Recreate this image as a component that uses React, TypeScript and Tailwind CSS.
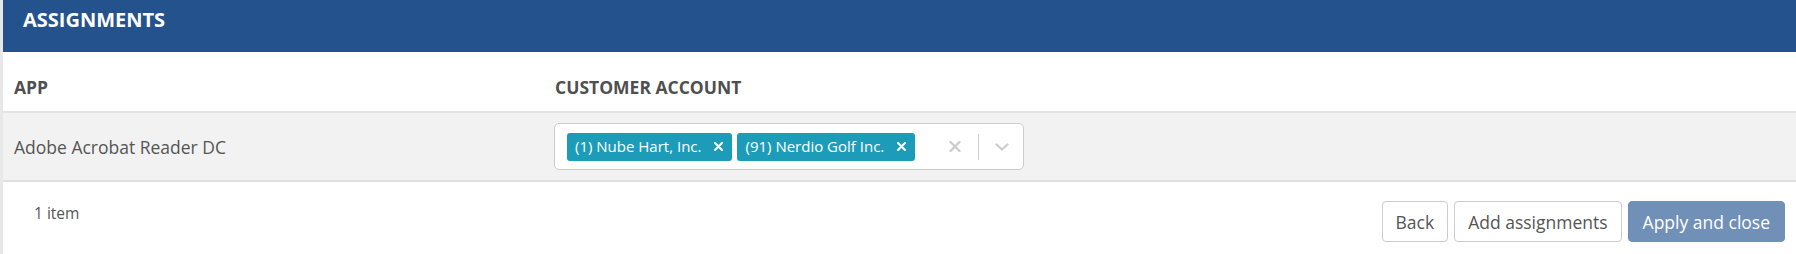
const ClearIcon = () => (
  <svg viewBox="0 0 12 12" className="h-[13px] w-[12px]" fill="none" stroke="#cccccc" strokeWidth={2.4} strokeLinecap="round">
    <path d="M1.5 1.5l9 9M10.5 1.5l-9 9" />
  </svg>
);

const Chevron = () => (
  <svg viewBox="0 0 14 8" className="h-[8px] w-[14px]" fill="none" stroke="#cccccc" strokeWidth={2.2} strokeLinecap="round" strokeLinejoin="round">
    <path d="M1.5 1.5L7 6.5l5.5-5" />
  </svg>
);

const Chip = ({ label }: { label: string }) => (
  <span className="flex h-[28px] items-center gap-[13px] rounded-[3px] bg-[#1d9cb9] pl-[8px] pr-[9px] text-[15px] leading-none text-white">
    {label}
    <svg viewBox="0 0 9 9" className="h-[9px] w-[9px]" fill="none" stroke="white" strokeWidth={2} strokeLinecap="round">
      <path d="M1 1l7 7M8 1L1 8" />
    </svg>
  </span>
);

const App = () => {
  const customers = ["(1) Nube Hart, Inc.", "(91) Nerdio Golf Inc."];

  return (
    <div className="h-[254px] w-[1796px] border-l-[3px] border-[#e8e8e8] bg-white font-['Open_Sans',sans-serif] text-[#555555]">
      <div className="h-[52px] bg-[#24528c] pl-[20px] pt-[6px]">
        <h2 className="text-[20px] font-bold leading-[28px] text-white">ASSIGNMENTS</h2>
      </div>

      <div className="grid h-[61px] grid-cols-[540px_1fr] border-b-2 border-[#e3e3e3] pt-[23px] text-[17.5px] font-bold leading-[24px] text-[#4f4f4f]">
        <div className="pl-[11px]">APP</div>
        <div className="pl-[12px]">CUSTOMER ACCOUNT</div>
      </div>

      <div className="grid h-[69px] grid-cols-[540px_1fr] items-center border-b-2 border-[#e0e0e0] bg-[#f2f2f2] text-[17.5px] leading-[24px]">
        <div className="pl-[11px]">Adobe Acrobat Reader DC</div>
        <div className="pl-[11px]">
          <div className="flex h-[47px] w-[470px] items-center rounded-[5px] border border-[#cccccc] bg-white pl-[12px] pr-[14px]">
            <div className="flex gap-[5px]">
              {customers.map((c) => (
                <Chip key={c} label={c} />
              ))}
            </div>
            <div className="ml-auto flex items-center">
              <ClearIcon />
              <span className="ml-[17px] h-[26px] w-px bg-[#cccccc]" />
              <span className="ml-[16px]">
                <Chevron />
              </span>
            </div>
          </div>
        </div>
      </div>

      <div className="flex items-start justify-between pl-[31px] pr-[11px] pt-[19px] text-[17.5px] leading-[24px]">
        <span className="text-[15.5px]">1 item</span>
        <div className="flex gap-[6px]">
          <button className="h-[41px] rounded-[4px] border border-[#cccccc] bg-white px-[13px]">Back</button>
          <button className="h-[41px] rounded-[4px] border border-[#cccccc] bg-white px-[13px]">Add assignments</button>
          <button className="h-[41px] rounded-[4px] border border-[#7190b8] bg-[#7190b8] px-[14px] text-white">Apply and close</button>
        </div>
      </div>
    </div>
  );
};

export default App;
